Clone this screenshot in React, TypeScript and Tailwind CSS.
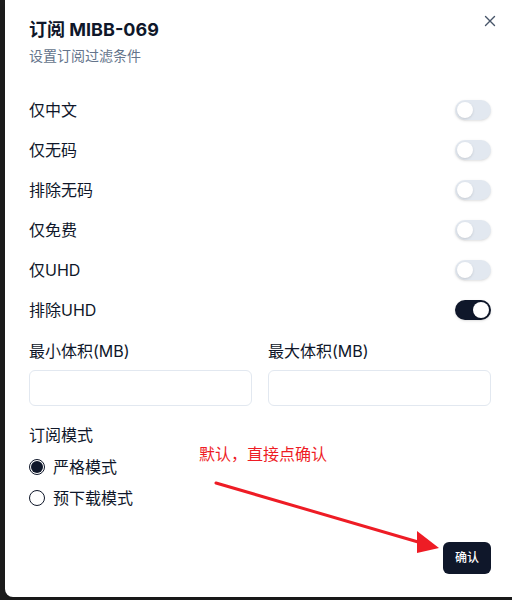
import { useState } from "react";

const filters = [
  { label: "仅中文", on: false },
  { label: "仅无码", on: false },
  { label: "排除无码", on: false },
  { label: "仅免费", on: false },
  { label: "仅UHD", on: false },
  { label: "排除UHD", on: true },
];

function Toggle({ on, onClick }: { on: boolean; onClick: () => void }) {
  return (
    <button
      onClick={onClick}
      className={`flex h-5 w-9 items-center rounded-full p-[2px] shadow-sm ${
        on ? "justify-end bg-[#0f172a]" : "justify-start bg-[#e2e8f0]"
      }`}
    >
      <span className="block h-4 w-4 rounded-full bg-white shadow" />
    </button>
  );
}

function Radio({ checked, label }: { checked: boolean; label: string }) {
  return (
    <label className="flex h-6 items-center gap-2">
      <span className="flex h-4 w-4 items-center justify-center rounded-full border border-[#0f172a] bg-white">
        {checked && <span className="block h-[12px] w-[12px] rounded-full bg-[#0f172a]" />}
      </span>
      <span className="text-base text-[#0f172a]">{label}</span>
    </label>
  );
}

export default function App() {
  const [state, setState] = useState(filters.map((f) => f.on));
  const [mode] = useState("strict");

  return (
    <div
      className="flex h-[600px] w-[512px] overflow-hidden bg-[#1c1c1c] pl-[5px]"
      style={{ fontFamily: "Inter, 'Noto Sans CJK SC', sans-serif" }}
    >
      <div className="relative flex h-[597px] w-[510px] shrink-0 flex-col rounded-bl-lg bg-white px-6 pt-4 shadow-lg">
        {/* close */}
        <button className="absolute right-[19px] top-[15px] text-[#475569]">
          <svg width="12" height="12" viewBox="0 0 12 12" fill="none">
            <path d="M1.5 1.5 L10.5 10.5 M10.5 1.5 L1.5 10.5" stroke="currentColor" strokeWidth="1.4" strokeLinecap="round" />
          </svg>
        </button>

        <h2 className="text-lg font-bold leading-7 text-[#0f172a]">订阅 MIBB-069</h2>
        <p className="mt-[2px] text-sm leading-5 text-[#64748b]">设置订阅过滤条件</p>

        <div className="mt-6 flex flex-col">
          {filters.map((f, i) => (
            <div key={f.label} className="flex h-10 items-center justify-between">
              <span className="text-base text-[#0f172a]">{f.label}</span>
              <Toggle
                on={state[i]}
                onClick={() => setState(state.map((v, j) => (j === i ? !v : v)))}
              />
            </div>
          ))}
        </div>

        <div className="mt-[9px] grid grid-cols-2 gap-4">
          <div className="flex flex-col">
            <span className="text-base leading-6 text-[#0f172a]">最小体积(MB)</span>
            <input className="mt-[7px] h-9 rounded-md border border-[#e2e8f0] px-3 outline-none" />
          </div>
          <div className="flex flex-col">
            <span className="text-base leading-6 text-[#0f172a]">最大体积(MB)</span>
            <input className="mt-[7px] h-9 rounded-md border border-[#e2e8f0] px-3 outline-none" />
          </div>
        </div>

        <div className="relative mt-[17px] flex flex-col">
          <span className="text-base leading-6 text-[#0f172a]">订阅模式</span>
          <div className="mt-2 flex flex-col gap-[7px]">
            <Radio checked={mode === "strict"} label="严格模式" />
            <Radio checked={mode === "pre"} label="预下载模式" />
          </div>
          <span className="absolute left-[170px] top-[19px] text-base text-[#ee1c25]">
            默认，直接点确认
          </span>
        </div>

        <div className="mt-8 flex justify-end">
          <button className="h-8 rounded-md bg-[#0f172a] px-3 text-xs font-medium text-white">
            确认
          </button>
        </div>

        {/* annotation arrow */}
        <svg className="pointer-events-none absolute left-0 top-0" width="512" height="600">
          <line x1="211" y1="483" x2="420" y2="544" stroke="#ee1c25" strokeWidth="3" strokeLinecap="round" />
          <polygon points="434,548 412,531 412,553" fill="#ee1c25" />
        </svg>
      </div>
    </div>
  );
}
